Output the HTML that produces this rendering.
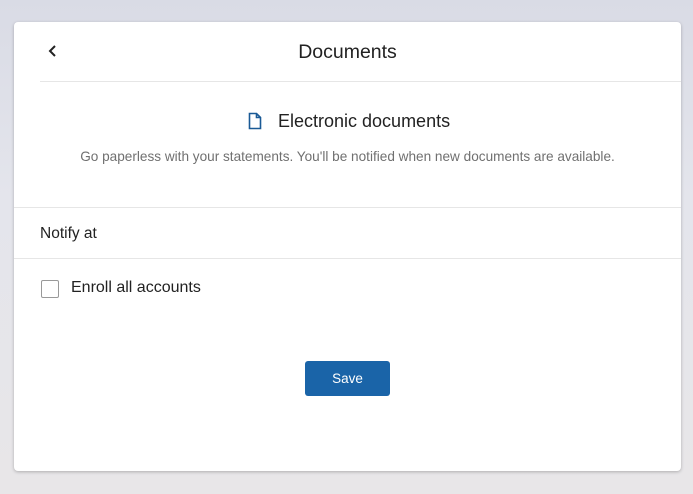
<!DOCTYPE html>
<html><head><style>
*{margin:0;padding:0;box-sizing:border-box}
body{width:693px;height:494px;overflow:hidden;font-family:"Liberation Sans",sans-serif;background:linear-gradient(#d9dbe5 0%,#e4e5ec 40%,#e8e6e8 100%);position:relative}
.card{position:absolute;left:14px;top:22px;width:667px;height:449px;background:#fff;border-radius:4px;box-shadow:0 1px 3px rgba(0,0,0,.25)}
.t{position:absolute;color:#222;white-space:nowrap}
.line{position:absolute;height:1px;background:#e6e6e6}
</style></head><body>
<div class="card">
<svg style="position:absolute;left:33px;top:22px" width="12" height="14" viewBox="0 0 12 14"><path d="M8 2L3 7l5 5" fill="none" stroke="#222" stroke-width="2"/></svg>
<div class="t" style="left:0;width:667px;text-align:center;top:19px;font-size:19.5px">Documents</div>
<div class="line" style="left:26px;right:0;top:59px"></div>
<svg style="position:absolute;left:234px;top:90px" width="14" height="18" viewBox="0 0 14 18"><path d="M1.5 1.5h7l4 4v11h-11z M8.5 1.5v4h4" fill="none" stroke="#1a5a96" stroke-width="1.6"/></svg>
<div class="t" style="left:264px;top:89px;font-size:18px">Electronic documents</div>
<div class="t" style="left:0;width:667px;text-align:center;top:127px;font-size:13.6px;color:#707070">Go paperless with your statements. You'll be notified when new documents are available.</div>
<div class="line" style="left:0;right:0;top:185px"></div>
<div class="t" style="left:26px;top:203px;font-size:15.5px">Notify at</div>
<div class="line" style="left:0;right:0;top:236px"></div>
<div style="position:absolute;left:27px;top:258px;width:18px;height:18px;border:1px solid #999;border-radius:2px"></div>
<div class="t" style="left:57px;top:257px;font-size:16px">Enroll all accounts</div>
<div style="position:absolute;left:291px;top:339px;width:85px;height:35px;background:#1a64a8;border-radius:3px;color:#fff;font-size:13.5px;text-align:center;line-height:35px">Save</div>
</div>
</body></html>
